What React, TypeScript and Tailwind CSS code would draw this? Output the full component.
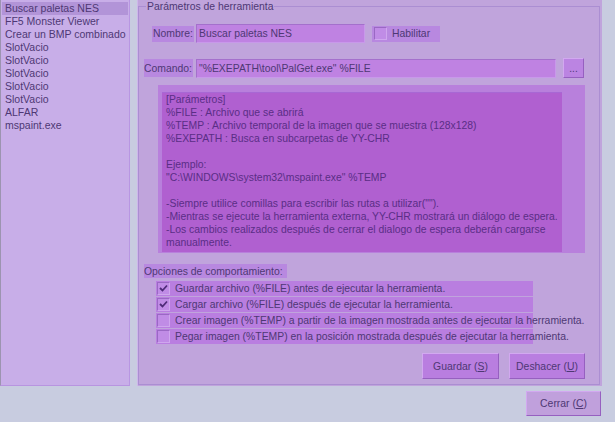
import React from "react";

const TOOLS = [
  "Buscar paletas NES",
  "FF5 Monster Viewer",
  "Crear un BMP combinado",
  "SlotVacio",
  "SlotVacio",
  "SlotVacio",
  "SlotVacio",
  "SlotVacio",
  "ALFAR",
  "mspaint.exe",
];

const HELP = [
  "[Parámetros]",
  "%FILE : Archivo que se abrirá",
  "%TEMP : Archivo temporal de la imagen que se muestra (128x128)",
  "%EXEPATH : Busca en subcarpetas de YY-CHR",
  "",
  "Ejemplo:",
  "\"C:\\WINDOWS\\system32\\mspaint.exe\" %TEMP",
  "",
  "-Siempre utilice comillas para escribir las rutas a utilizar(\"\").",
  "-Mientras se ejecute la herramienta externa, YY-CHR mostrará un diálogo de espera.",
  "-Los cambios realizados después de cerrar el dialogo de espera deberán cargarse",
  "manualmente.",
];

const OPTIONS = [
  { label: "Guardar archivo (%FILE) antes de ejecutar la herramienta.", checked: true },
  { label: "Cargar archivo (%FILE) después de ejecutar la herramienta.", checked: true },
  { label: "Crear imagen (%TEMP) a partir de la imagen mostrada antes de ejecutar la herramienta.", checked: false },
  { label: "Pegar imagen (%TEMP) en la posición mostrada después de ejecutar la herramienta.", checked: false },
];

function CheckBox({ checked }: { checked: boolean }) {
  return (
    <span className="flex h-[13px] w-[13px] shrink-0 items-center justify-center border border-t-[#9a68c4] border-l-[#9a68c4] border-r-[#cfa6ee] border-b-[#cfa6ee] bg-[#c08ce6]">
      {checked && (
        <svg width="9" height="9" viewBox="0 0 9 9">
          <path d="M1 4 L3.5 6.5 L8 1.5" fill="none" stroke="#4e2a78" strokeWidth="1.8" />
        </svg>
      )}
    </span>
  );
}

function Button({ children, className = "" }: { children: React.ReactNode; className?: string }) {
  return (
    <button
      className={`flex items-center justify-center border border-t-[#d2a8f0] border-l-[#d2a8f0] border-r-[#9660c0] border-b-[#9660c0] ${className}`}
    >
      {children}
    </button>
  );
}

export default function App() {
  return (
    <div className="h-[422px] w-[615px] overflow-hidden bg-[#c8cce0] font-['Liberation_Sans',Arial,sans-serif] text-[10.4px] leading-[13px] text-[#4e3874]">
      <div className="flex h-[386px]">
        {/* lista de herramientas */}
        <ul className="h-[386px] w-[130px] border-l border-l-[#9c94b0] border-r border-r-[#b896e2] border-b border-b-[#b894e0] bg-[#c8aee8] pt-[2px] pl-[1px] pr-[1px] text-[10.5px]">
          {TOOLS.map((t, i) => (
            <li
              key={i}
              className={`h-[13px] whitespace-nowrap pl-[3px] ${i === 0 ? "bg-[#b294d8]" : ""}`}
            >
              {t}
            </li>
          ))}
        </ul>

        {/* panel */}
        <div className="ml-[7px] h-[386px] w-[465px] border-l border-l-[#cdb6ea] bg-[#c0a4dc] pr-[2px]">
          <fieldset className="h-[385px] border border-[#ab8ed2] p-0">
            <legend className="ml-[7px] px-[1px] leading-[13px]">Parámetros de herramienta</legend>

            {/* Nombre */}
            <div className="mt-[11px] flex h-[19px] items-center">
              <span className="ml-[13px] flex h-[16px] w-[42px] items-center whitespace-nowrap bg-[#b888e0] pl-[1px]">Nombre:</span>
              <div className="ml-[2px] flex h-[19px] w-[169px] items-center border border-t-[#a470cc] border-l-[#a470cc] border-r-[#c898ea] border-b-[#c898ea] bg-[#bf82e2] pl-[2px]">
                Buscar paletas NES
              </div>
              <div className="ml-[7px] flex h-[16px] w-[68px] items-center bg-[#b888e0] pl-[2px]">
                <CheckBox checked={false} />
                <span className="ml-[5px]">Habilitar</span>
              </div>
            </div>

            {/* Comando */}
            <div className="mt-[15px] flex h-[20px] items-center">
              <span className="ml-[5px] flex h-[18px] w-[49px] items-center whitespace-nowrap bg-[#b888e0]">Comando:</span>
              <div className="ml-[3px] flex h-[19px] w-[360px] items-center border border-t-[#a470cc] border-l-[#a470cc] border-r-[#c898ea] border-b-[#c898ea] bg-[#bf82e2] pl-[2px]">
                "%EXEPATH\tool\PalGet.exe" %FILE
              </div>
              <Button className="ml-[7px] h-[20px] w-[21px] bg-[#bb84e2] text-[10px]">...</Button>
            </div>

            {/* ayuda */}
            <div className="ml-[19px] mt-[7px] h-[168px] w-[427px] bg-[#b880dc] pl-[4px] pt-[7px]">
              <div className="h-[160px] w-[400px] border-t border-t-[#a868d4] bg-[#b060d0] pl-[4px] text-[#5a2e86]">
                {HELP.map((l, i) => (
                  <div key={i} className="h-[13px] whitespace-nowrap">
                    {l}
                  </div>
                ))}
              </div>
            </div>

            {/* opciones */}
            <div className="ml-[5px] mt-[11px] flex h-[14px] w-[143px] items-center whitespace-nowrap bg-[#b888e0]">
              Opciones de comportamiento:
            </div>
            <div className="ml-[17px] mt-[3px] flex w-[377px] flex-col gap-[1px]">
              {OPTIONS.map((o, i) => (
                <div key={i} className="flex h-[15px] items-center bg-[#b97ee0] pl-[1px]">
                  <CheckBox checked={o.checked} />
                  <span className="ml-[5px] whitespace-nowrap">{o.label}</span>
                </div>
              ))}
            </div>

            <div className="mt-[9px] flex justify-end gap-[10px] pr-[14px]">
              <Button className="h-[26px] w-[77px] bg-[#b97ee0]">
                Guardar (<span className="underline">S</span>)
              </Button>
              <Button className="h-[26px] w-[76px] bg-[#b97ee0]">
                Deshacer (<span className="underline">U</span>)
              </Button>
            </div>
          </fieldset>
        </div>
      </div>

      <div className="flex justify-end pr-[14px] pt-[5px]">
        <Button className="h-[25px] w-[75px] bg-[#c0a0dc]">
          Cerrar (<span className="underline">C</span>)
        </Button>
      </div>
    </div>
  );
}
